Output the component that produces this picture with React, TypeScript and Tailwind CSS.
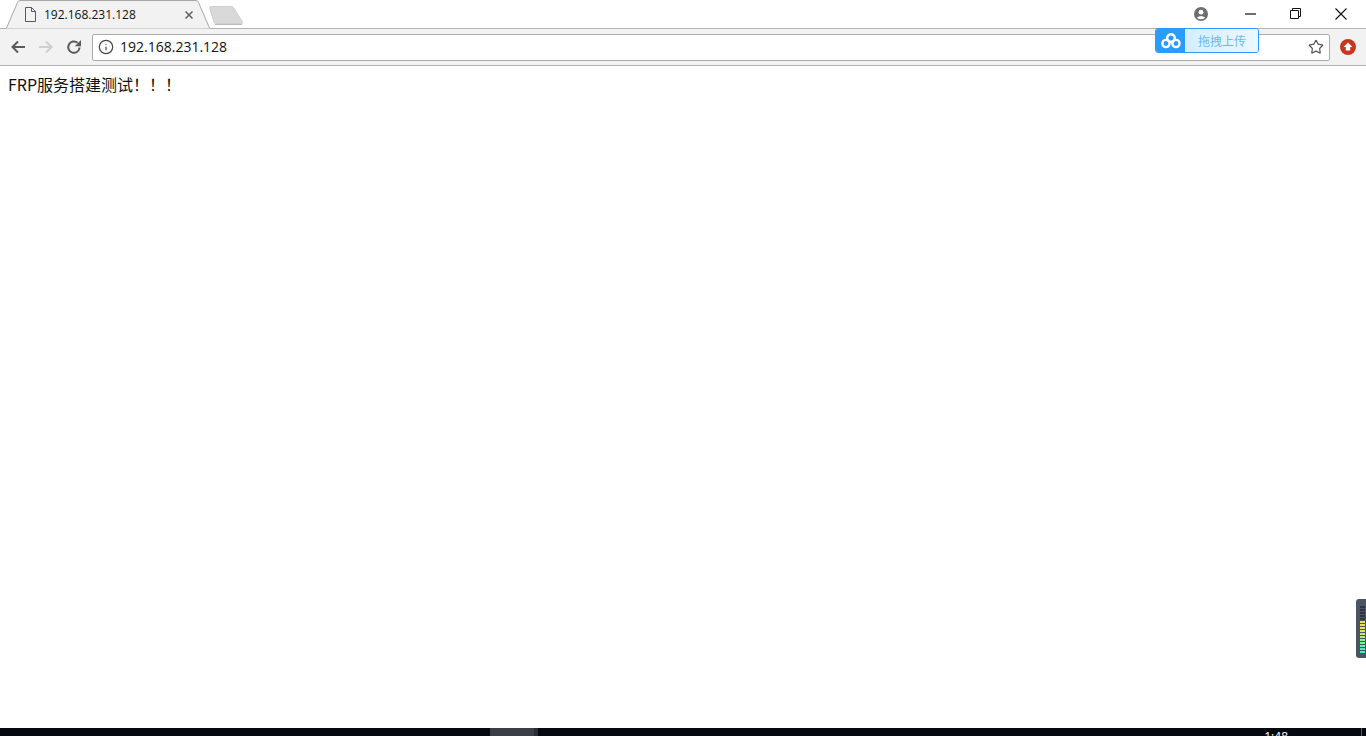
import React from "react";
import { Info, Star } from "lucide-react";

const meter = [
  "#2f3540", "#2f3540", "#2f3540", "#2f3540", "#2f3540",
  "#e8dc5a", "#e8e05c", "#e2e45e", "#d8e864", "#c6ea6c", "#b0ec78", "#94ee88", "#7aee98", "#62eeaa", "#50ecb8", "#48e8c0",
];

export default function App() {
  return (
    <div className="relative flex h-[736px] w-[1366px] flex-col overflow-hidden bg-white font-['Open_Sans',sans-serif]">
      {/* tab strip */}
      <div className="flex h-[29px] shrink-0 border-b border-[#b4b4b4] bg-white">
        <div className="relative ml-[5px] flex h-[29px] w-[206px] items-center pl-[20px]">
          <svg className="absolute left-0 top-0" width="206" height="29" viewBox="0 0 206 29">
            <path d="M0.5 28.5 L1.5 28 L12.5 2.5 Q13 0.5 15 0.5 L191 0.5 Q193 0.5 193.5 2.5 L204.5 28 L205.5 28.5 Z" fill="#f2f2f2" />
            <path d="M0.5 28.5 L1.5 28 L12.5 2.5 Q13 0.5 15 0.5 L191 0.5 Q193 0.5 193.5 2.5 L204.5 28 L205.5 28.5" fill="none" stroke="#a8a8a8" />
          </svg>
          <svg className="relative -mt-[1px]" width="11" height="15" viewBox="0 0 11 15">
            <path d="M0.5 0.5 H6.5 L10.5 4.5 V14.5 H0.5 Z M6.5 0.5 V4.5 H10.5" fill="none" stroke="#5a5a5a" />
          </svg>
          <span className="relative ml-[8px] text-[12px] leading-none text-[#111]">192.168.231.128</span>
          <svg className="absolute left-[180px] top-[11px]" width="8" height="8" viewBox="0 0 8 8">
            <path d="M0.5 0.5 L7.5 7.5 M7.5 0.5 L0.5 7.5" stroke="#5f5f5f" strokeWidth="1.5" />
          </svg>
        </div>
        <svg className="ml-[-3px] mt-[6px]" width="36" height="19" viewBox="0 0 36 19">
          <path d="M1.5 1.5 Q1.5 0.5 3 0.5 L23.5 0.5 Q25 0.5 25.5 1.5 L34.5 16 Q35 17.5 33.5 17.5 L8 17.5 Q6.5 17.5 6 16 Z" fill="#d9d9d9" stroke="#cfcfcf" />
          <path d="M7 18.5 L34 18.5" stroke="#bdbdbd" />
        </svg>
        <div className="flex-1" />
        <div className="flex h-[28px] items-center">
          <svg width="14" height="14" viewBox="0 0 14 14" className="mr-[37px] -mt-[1px]">
            <circle cx="7" cy="7" r="7" fill="#6f6f6f" />
            <circle cx="7" cy="5.2" r="2.4" fill="#fff" />
            <path d="M2.8 10.8 Q7 7.2 11.2 10.8 Q7 13.8 2.8 10.8 Z" fill="#fff" />
          </svg>
          <svg width="11" height="2" viewBox="0 0 11 2" className="mr-[34px] -mt-[1px]">
            <path d="M0 1 L11 1" stroke="#111" strokeWidth="1.2" />
          </svg>
          <svg width="11" height="11" viewBox="0 0 11 11" className="mr-[34px] -mt-[1px]">
            <path d="M0.5 2.5 H8.5 V10.5 H0.5 Z M2.5 2.5 V0.5 H10.5 V8.5 H8.5" fill="none" stroke="#111" />
          </svg>
          <svg width="12" height="12" viewBox="0 0 12 12" className="mr-[19px] -mt-[1px]">
            <path d="M0.5 0.5 L11.5 11.5 M11.5 0.5 L0.5 11.5" stroke="#111" strokeWidth="1.1" />
          </svg>
        </div>
      </div>

      {/* toolbar */}
      <div className="flex h-[37px] shrink-0 items-center border-b border-[#b4b4b4] bg-[#f2f2f2]">
        <svg width="16" height="14" viewBox="0 0 16 14" className="ml-[10px]">
          <path d="M15 7 H2.5 M8 1.5 L2.5 7 L8 12.5" fill="none" stroke="#5a5a5a" strokeWidth="2" />
        </svg>
        <svg width="16" height="14" viewBox="0 0 16 14" className="ml-[12px]">
          <path d="M1 7 H13.5 M8 1.5 L13.5 7 L8 12.5" fill="none" stroke="#cfcfcf" strokeWidth="2" />
        </svg>
        <svg width="16" height="16" viewBox="0 0 16 16" className="ml-[12px]">
          <path d="M13.6 8.5 A5.7 5.7 0 1 1 11.6 3.8" fill="none" stroke="#5a5a5a" strokeWidth="2" />
          <path d="M15 1 V7.2 H8.8 Z" fill="#5a5a5a" />
        </svg>
        <div className="ml-[10px] flex h-[27px] w-[1238px] items-center rounded-[2px] border border-[#ababab] bg-white">
          <Info className="ml-[5px] text-[#444]" size={16} strokeWidth={1.8} />
          <span className="ml-[6px] text-[14px] leading-none text-[#111]">192.168.231.128</span>
          <div className="flex-1" />
          <Star className="mr-[5px] text-[#555]" size={16} strokeWidth={1.8} />
        </div>
        <svg width="16" height="16" viewBox="0 0 16 16" className="ml-[10px]">
          <circle cx="8" cy="8" r="8" fill="#c8361f" />
          <path d="M8 3.4 L12.4 8 H10.2 V11.6 H5.8 V8 H3.6 Z" fill="#fff" />
        </svg>
      </div>

      {/* page */}
      <main className="flex-1 bg-white px-[8px] pt-[7px]">
        <p className="font-['Noto_Sans_CJK_SC','Open_Sans',sans-serif] text-[16px] leading-[22px] text-[#111]">FRP服务搭建测试！！！</p>
      </main>

      {/* taskbar */}
      <footer className="flex h-[8px] shrink-0 overflow-hidden bg-[#05090f]">
        <div className="w-[490px]" />
        <div className="h-full w-[44px] bg-[#3b3e44]" />
        <div className="h-full w-[4px] bg-[#2a2d32]" />
        <div className="flex-1" />
        <span className="mr-[73px] mt-[3px] text-[12px] leading-none text-white">1:48</span>
        <div className="h-full w-px bg-[#5a5d62]" />
        <div className="w-[4px]" />
      </footer>

      {/* cloud upload overlay */}
      <div className="absolute left-[1155px] top-[28px] flex h-[25px] w-[104px] overflow-hidden rounded-[3px] border border-[#2a9cff]">
        <div className="flex w-[29px] items-center justify-center bg-[#2a9cff]">
          <svg width="20" height="16" viewBox="0 0 20 16">
            <g fill="none" stroke="#fff" strokeWidth="2.4">
              <circle cx="10" cy="5" r="3.8" />
              <circle cx="5" cy="10.5" r="3.6" />
              <circle cx="15" cy="10.5" r="3.6" />
            </g>
          </svg>
        </div>
        <div className="flex flex-1 items-center justify-center bg-gradient-to-r from-[#d4eeff] to-[#eaf8ff] pl-[1px] font-['Noto_Sans_CJK_SC',sans-serif] text-[12px] leading-none text-[#6db9f5]">
          拖拽上传
        </div>
      </div>

      {/* level meter overlay */}
      <div className="absolute left-[1356px] top-[599px] flex h-[59px] w-[10px] flex-col gap-[1px] rounded-l-[3px] bg-[#4c5361] pl-[4px] pt-[7px]">
        {meter.map((c, i) => (
          <div key={i} className="h-[2px] w-[5px] shrink-0" style={{ backgroundColor: c }} />
        ))}
      </div>
    </div>
  );
}
